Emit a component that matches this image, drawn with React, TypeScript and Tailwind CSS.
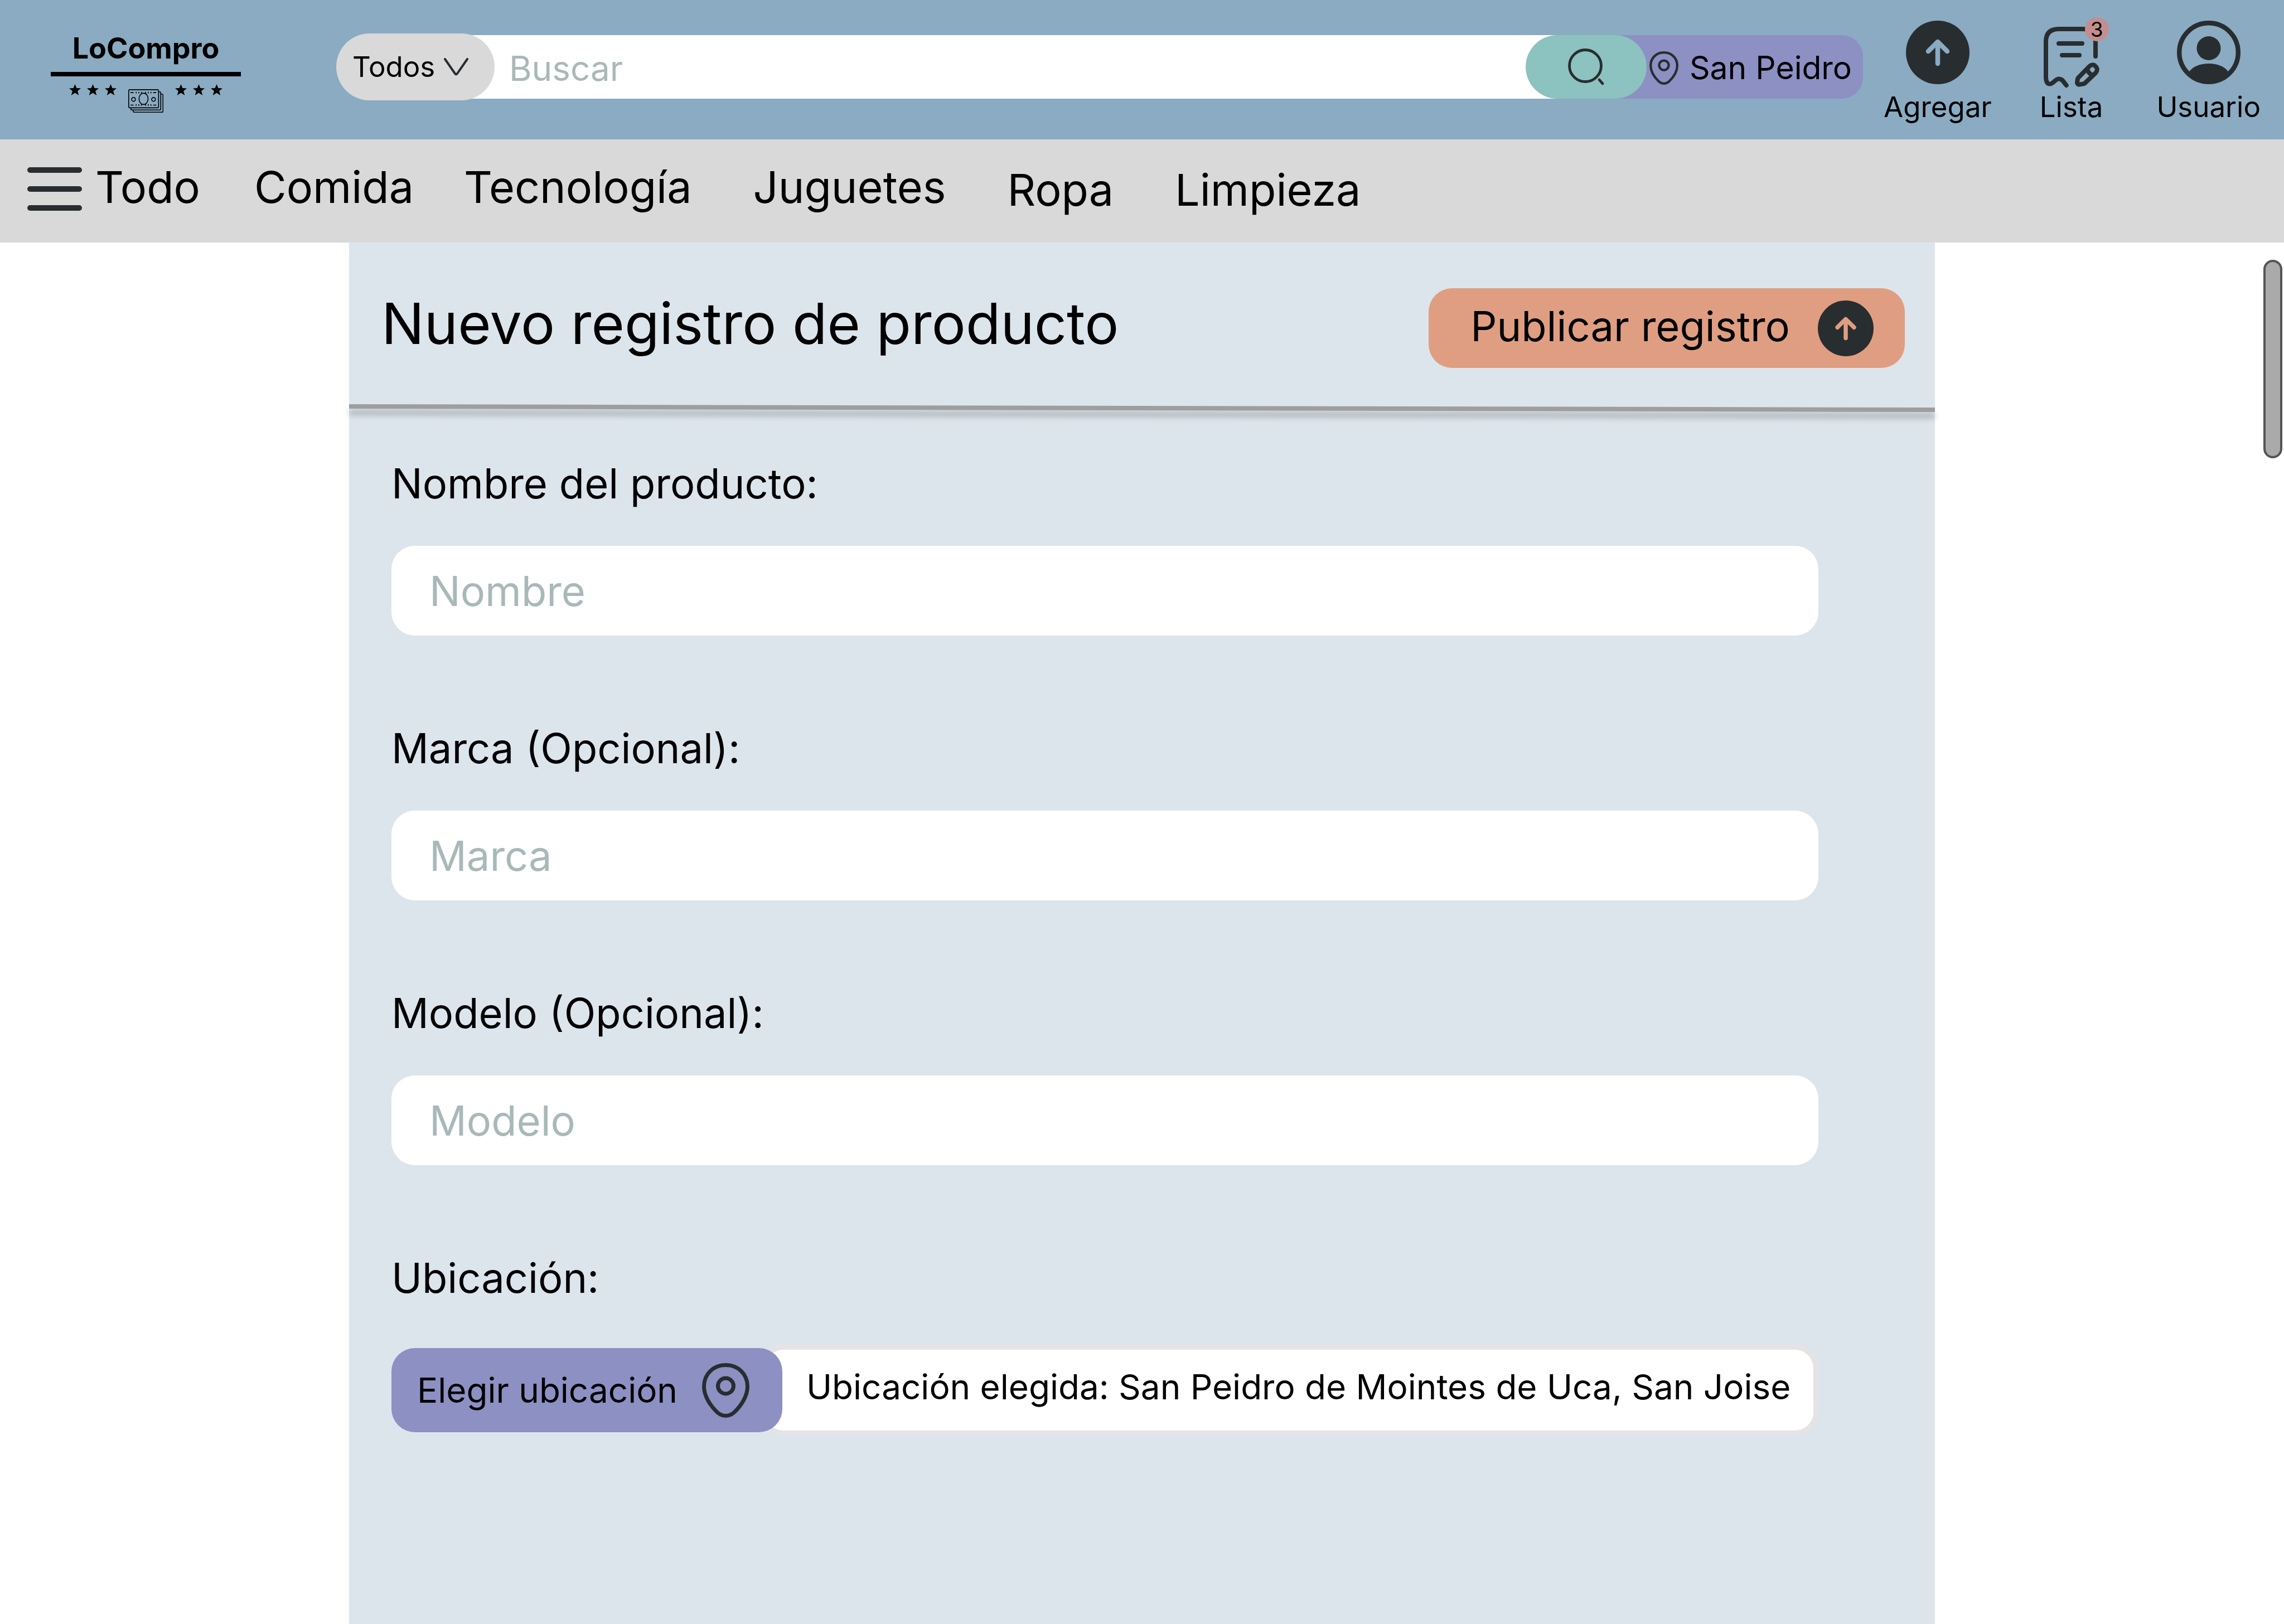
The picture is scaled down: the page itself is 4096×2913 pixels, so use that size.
import React from "react";

const DARK = "#282d30";

function Star() {
  return (
    <svg viewBox="0 0 20 19" className="h-5 w-[21px]" fill="black" aria-hidden="true">
      <path d="M10 0l2.700 6.600 7.300.4-5.600 4.600 2 7.400-6.400-4.200L3.600 19l2-7.400L0 7l7.300-.4z" />
    </svg>
  );
}

function Stars() {
  return (
    <span className="flex gap-[11px]">
      <Star />
      <Star />
      <Star />
    </span>
  );
}

function Bills() {
  return (
    <svg viewBox="0 0 93 62" className="mt-[9px] h-[42px] w-[63px]" fill="none" stroke="black" strokeWidth="2.4" aria-hidden="true">
      <rect x="1.200" y="1.200" width="79" height="48" rx="3" />
      <path d="M81 7h2q3 0 3 3v42q0 3-3 3H10q-3 0-3-3v-2" />
      <path d="M87 13h2q3 0 3 3v42q0 3-3 3H16q-3 0-3-3v-2" />
      <ellipse cx="40.500" cy="25.500" rx="12" ry="15" />
      <circle cx="14" cy="27" r="5" />
      <circle cx="67" cy="27" r="5" />
      <path d="M6 9h8M66 9h8M6 42h8M66 42h8M21 7v4M28 7v4M35 7v4M46 7v4M53 7v4M60 7v4M21 40v4M28 40v4M35 40v4M46 40v4M53 40v4M60 40v4" />
    </svg>
  );
}

function Logo() {
  return (
    <a href="#inicio" className="flex w-[341px] flex-col items-center text-black">
      <span className="text-[52px] leading-[60px] font-bold">LoCompro</span>
      <span className="mt-3 h-2 w-full bg-black" />
      <span className="mt-[14px] flex w-full items-start justify-center gap-[21px]">
        <Stars />
        <Bills />
        <Stars />
      </span>
    </a>
  );
}

function Pin({ className }: { className: string }) {
  return (
    <svg viewBox="0 0 85 98" className={className} fill="none" stroke={DARK} strokeWidth="7" aria-hidden="true">
      <path d="M42.500 3.500C20 3.500 3.500 20 3.500 42c0 17 11 34 24 46.500 9 8 21 8 30 0C70.500 76 81.500 59 81.500 42 81.500 20 65 3.500 42.500 3.500z" />
      <circle cx="42.500" cy="41" r="14" />
    </svg>
  );
}

function ArrowCircle({ className, arrow }: { className: string; arrow: string }) {
  return (
    <svg viewBox="0 0 114 114" className={className} fill="none" aria-hidden="true">
      <circle cx="57" cy="57" r="57" fill={DARK} />
      <path d="M57 77V39M40 55l17-17 17 17" stroke={arrow} strokeWidth="8.500" strokeLinecap="round" strokeLinejoin="round" />
    </svg>
  );
}

function UserCircle() {
  return (
    <svg viewBox="0 0 114 114" className="size-[114px]" fill="none" aria-hidden="true">
      <circle cx="57" cy="57" r="52.800" stroke={DARK} strokeWidth="8.400" />
      <circle cx="57" cy="49.500" r="21.500" fill={DARK} />
      <path d="M22.500 91C29 82 42 77 57 77s28 5 34.500 14c-8 14-20.500 21-34.500 21s-26.500-7-34.500-21z" fill={DARK} />
    </svg>
  );
}

function ListIcon() {
  return (
    <svg viewBox="0 0 100 110" className="h-[110px] w-[100px]" fill="none" stroke={DARK} strokeWidth="8" strokeLinecap="round" strokeLinejoin="round" aria-hidden="true">
      <path d="M93 53V27Q93 4 70 4H27Q4 4 4 27V90C4 98 6.500 102.600 10.700 102.600C18 102.600 20 93.500 27.500 93.500C34 93.500 35.500 99 40.700 105" />
      <path d="M27 30h42M33 51h31" />
      <path d="M62 91.500L81.500 71.500C85 67.500 89.500 67.500 92.500 70.500L93.500 71.500C96.500 74.500 96.500 79 93.500 82.500L74 101.200Q73 102 72 102.200L64 103.600Q60 104 60 100L61 93.500Q61.200 92.200 62 91.500zM79 78Q81 84 87 86.500" />
    </svg>
  );
}

function Header() {
  return (
    <header className="flex h-[250px] items-start bg-[#8aabc2] pr-[42px] pl-[91px]">
      <div className="pt-[57px]">
        <Logo />
      </div>
      <form className="mt-[60px] ml-[171px] flex flex-1 items-center" onSubmit={(e) => e.preventDefault()}>
        <button type="button" className="z-10 flex h-[120px] w-[284px] items-center gap-4 rounded-full bg-[#d9d9d9] pl-[29px] text-[51px]">
          Todos
          <svg viewBox="0 0 44 32" className="h-8 w-11" fill="none" stroke={DARK} strokeWidth="4" strokeLinecap="round" strokeLinejoin="round" aria-hidden="true">
            <path d="M2 2l18 26q2 3 4 0L42 2" />
          </svg>
        </button>
        <input
          aria-label="Buscar"
          placeholder="Buscar"
          className="-mr-[60px] -ml-[60px] h-[114px] min-w-0 flex-1 bg-white pt-1 pr-20 pl-[86px] text-[62px] placeholder:text-[#a9b8b8]"
        />
        <button type="submit" aria-label="Buscar producto" className="z-10 flex h-[114px] w-[217px] items-center justify-center rounded-full bg-[#8cc2bf]">
          <svg viewBox="0 0 66 68" className="h-[68px] w-[66px]" fill="none" stroke={DARK} strokeWidth="4.800" strokeLinecap="round" aria-hidden="true">
            <circle cx="31" cy="32" r="28.500" />
            <path d="M56 57l6 7" />
          </svg>
        </button>
        <button type="button" className="-ml-[60px] flex h-[114px] items-center gap-5 rounded-r-[38px] bg-[#8d90c3] pt-1 pr-5 pl-[65px] text-[57px]">
          <Pin className="h-[60px] w-[52px]" />
          San Peidro
        </button>
      </form>
      <nav aria-label="Cuenta" className="ml-[37px] flex items-start pt-[37px] text-[51px] leading-[60px]">
        <a href="#agregar" className="flex flex-col items-center gap-[11px]">
          <ArrowCircle className="size-[114px]" arrow="#8aabc2" />
          Agregar
        </a>
        <a href="#lista" className="ml-[86px] flex flex-col items-center gap-1 pt-[11px]">
          <span className="relative">
            <ListIcon />
            <span className="absolute -top-[17px] left-[74px] flex size-[43px] items-center justify-center rounded-full bg-[#c48e90] text-[37px]">3</span>
          </span>
          Lista
        </a>
        <a href="#usuario" className="ml-24 flex flex-col items-center gap-[11px]">
          <UserCircle />
          Usuario
        </a>
      </nav>
    </header>
  );
}

function CategoryNav() {
  return (
    <nav aria-label="Categorías" className="flex h-[185px] items-start bg-[#d9d9d9] pt-[37px] pl-[49px] text-[79px] leading-[96px]">
      <a href="#todo" className="flex items-center gap-6">
        <svg viewBox="0 0 98 78" className="mt-2 h-[78px] w-[98px]" stroke={DARK} strokeWidth="10" strokeLinecap="round" aria-hidden="true">
          <path d="M5 5h88M5 39h88M5 73h88" />
        </svg>
        Todo
      </a>
      <a href="#comida" className="ml-[97px]">Comida</a>
      <a href="#tecnologia" className="ml-[90px]">Tecnología</a>
      <a href="#juguetes" className="ml-[110px]">Juguetes</a>
      <div className="ml-[110px] flex gap-[110px] pt-[5px]">
        <a href="#ropa">Ropa</a>
        <a href="#limpieza">Limpieza</a>
      </div>
    </nav>
  );
}

function Field({ id, label, placeholder }: { id: string; label: string; placeholder: string }) {
  return (
    <div className="flex flex-col gap-[68px]">
      <label htmlFor={id} className="text-[74px] leading-[88px]">{label}</label>
      <input
        id={id}
        placeholder={placeholder}
        className="h-[161px] w-full rounded-[42px] bg-white px-[68px] text-[74px] placeholder:text-[#a9b8b8]"
      />
    </div>
  );
}

export default function App() {
  return (
    <div className="flex min-h-screen flex-col overflow-hidden bg-white font-['Inter',sans-serif] text-black">
      <Header />
      <CategoryNav />
      <div className="relative flex flex-1 justify-center">
        <main className="flex w-[69.434%] flex-col bg-[#dde5ec]">
          <div className="flex h-[296px] items-start justify-between pr-[54px] pl-[58px]">
            <h1 className="mt-[80px] text-[102px] leading-[130px]">Nuevo registro de producto</h1>
            <button type="button" className="mt-[82px] flex h-[143px] items-center gap-[50px] rounded-[42px] bg-[#df9e82] pr-[56px] pl-[75px] text-[74px]">
              <span className="pb-[6px]">Publicar registro</span>
              <ArrowCircle className="size-[100px]" arrow="#df9e82" />
            </button>
          </div>
          <div className="h-2 origin-right rotate-[0.12deg] bg-[#9e9e9e] shadow-[0_11px_11px_rgba(0,0,0,0.25)]" />
          <form className="flex flex-col gap-[158px] pt-[84px] pr-[209px] pl-[76px]" onSubmit={(e) => e.preventDefault()}>
            <Field id="nombre" label="Nombre del producto:" placeholder="Nombre" />
            <Field id="marca" label="Marca (Opcional):" placeholder="Marca" />
            <Field id="modelo" label="Modelo (Opcional):" placeholder="Modelo" />
            <div className="flex flex-col gap-[76px]">
              <label htmlFor="ubicacion" className="text-[74px] leading-[88px]">Ubicación:</label>
              <div className="flex items-center text-[62px]">
                <button type="button" className="z-10 flex h-[151px] w-[701px] shrink-0 items-center justify-between rounded-[42px] bg-[#8d90c3] pr-[59px] pl-[46px]">
                  Elegir ubicación
                  <Pin className="h-[98px] w-[85px]" />
                </button>
                <output id="ubicacion" className="-ml-10 flex h-[163px] flex-1 items-center rounded-[42px] border-[9px] border-[#e6e3e4] bg-white pb-3 pl-[74px] whitespace-nowrap">
                  Ubicación elegida: San Peidro de Mointes de Uca, San Joise
                </output>
              </div>
            </div>
          </form>
        </main>
        <div className="absolute top-[31px] right-[3px] h-[356px] w-[34px] rounded-full border-4 border-[#555555] bg-[#aaaaaa]" />
      </div>
    </div>
  );
}
